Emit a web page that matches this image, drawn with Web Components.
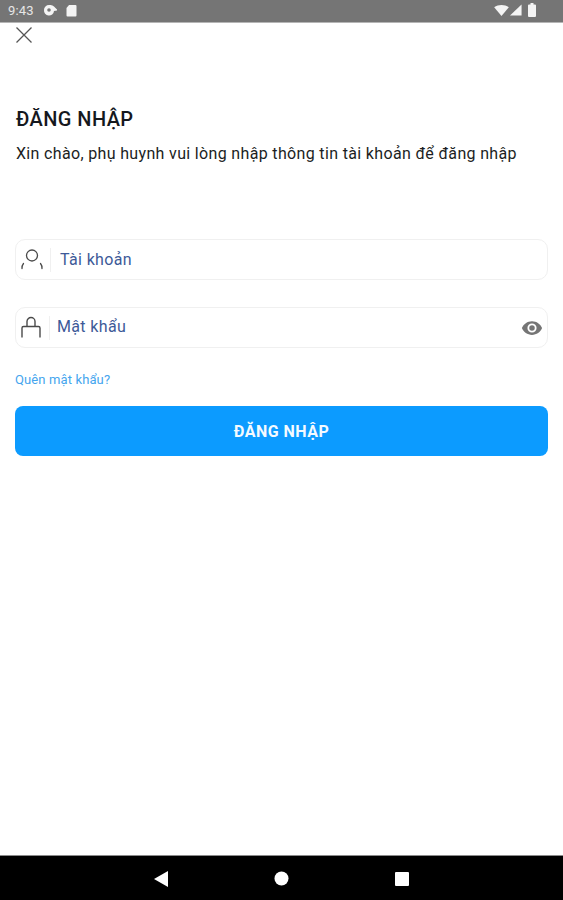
<!DOCTYPE html>
<html lang="vi">
<head>
<meta charset="utf-8">
<title>Đăng nhập</title>
<style>
  html, body { margin: 0; height: 100%; background: #fff; }
  body { font-family: Roboto, "Liberation Sans", sans-serif; }
</style>
</head>
<body>
<login-screen>
  <status-bar slot="top"></status-bar>
  <login-form></login-form>
  <nav-bar slot="bottom"></nav-bar>
</login-screen>

<script>
class LoginScreen extends HTMLElement {
  constructor() {
    super()
    this.attachShadow({ mode: 'open' })
    this.shadowRoot.innerHTML = `<style>
        :host { display: flex; flex-direction: column; height: 900px; width: 563px; overflow: hidden; }
        main { flex: 1; min-height: 0; }
      </style>
      <slot name="top"></slot>
      <main><slot></slot></main>
      <slot name="bottom"></slot>`
  }
}

class StatusBar extends HTMLElement {
  constructor() {
    super()
    this.attachShadow({ mode: 'open' })
    this.shadowRoot.innerHTML = `<style>
        :host { display: flex; align-items: center; height: 23px; box-sizing: border-box; padding: 0 25px 2px 8px; background: #757575; border-bottom: 1px solid #b5b5b5; color: #e6e6e6; font: 13px Roboto, sans-serif; }
        .left { display: flex; align-items: center; gap: 9px; flex: 1; }
        .right { display: flex; align-items: center; gap: 1px; }
        svg { display: block; fill: #f4f4f4; }
        span { letter-spacing: .2px; }
      </style>
      <div class="left">
        <span>9:43</span>
        <svg width="14" height="12" viewBox="0 0 14 12"><path d="M1 6a5 5 0 0 1 5-5h1.600a5 5 0 0 1 3.400 1.500L14 5.500v1l-3 .5A5 5 0 0 1 1 6z"/><circle cx="6" cy="6" r="1.800" fill="#757575"/></svg>
        <svg width="11" height="13" viewBox="0 0 11 13"><path d="M3 1h6.500A1 1 0 0 1 10.500 2v9.500a1 1 0 0 1-1 1h-8a1 1 0 0 1-1-1V4z"/></svg>
      </div>
      <div class="right">
        <svg width="15" height="11" viewBox="0 0 16 12"><path d="M0 2.500C4.500-.8 11.500-.8 16 2.500L8 12z"/></svg>
        <svg width="12" height="12" viewBox="0 0 13 12"><path d="M12.500 0v12H0z"/></svg>
        <svg width="11" height="14" viewBox="0 0 11 14" style="margin-left:4px"><path d="M3.500 0h3v1.500H8a1 1 0 0 1 1 1V13a1 1 0 0 1-1 1H2a1 1 0 0 1-1-1V2.500a1 1 0 0 1 1-1h1.500z"/></svg>
      </div>`
  }
}

class TextField extends HTMLElement {
  constructor() {
    super()
    this.attachShadow({ mode: 'open' })
    this.shadowRoot.innerHTML = `<style>
        :host { display: flex; align-items: center; height: 41px; box-sizing: border-box; border: 1px solid #f0f0f0; border-radius: 10px; background: #fff; }
        .icon { display: flex; justify-content: center; flex: none; box-sizing: border-box; width: var(--icon-w, 34px); padding-right: var(--icon-pad, 2px); border-right: 1px solid #f0f0f0; }
        .label { flex: 1; padding-left: var(--label-gap, 10px); padding-bottom: var(--label-lift, 0); color: #3d5a98; font-size: 16px; letter-spacing: .35px; }
        .end { display: flex; padding-right: 4px; }
      </style>
      <div class="icon"><slot name="icon"></slot></div>
      <div class="label"><slot></slot></div>
      <div class="end"><slot name="end"></slot></div>`
  }
}

class LoginForm extends HTMLElement {
  constructor() {
    super()
    this.attachShadow({ mode: 'open' })
    this.shadowRoot.innerHTML = `<style>
        :host { display: block; padding: 3px 15px 0; color: #14171c; }
        .close { display: block; }
        h1 { margin: 62px 0 0 1px; font-size: 20px; line-height: 26px; font-weight: 500; letter-spacing: .42px; color: #15181e; }
        p { margin: 11px 0 0 1px; font-size: 16px; line-height: 22px; letter-spacing: .34px; color: #1b1e23; }
        .fields { display: flex; flex-direction: column; gap: 27px; margin-top: 74px; }
        .user { --icon-w: 35px; --icon-pad: 3px; --label-gap: 9px; }
        .pass { --icon-w: 34px; --icon-pad: 4px; --label-gap: 7px; --label-lift: 2px; }
        svg { display: block; }
        a { display: block; margin: 24px 0 0; font-size: 13px; line-height: 16px; letter-spacing: .12px; color: #45a5ee; text-decoration: none; }
        button { display: block; width: 100%; height: 50px; margin-top: 18px; padding: 1px 0 0; border: 0; border-radius: 8px; background: #0c9bff; color: #f4faff; font: 700 16px Roboto, sans-serif; letter-spacing: .5px; }
      </style>
      <svg class="close" width="18" height="18" viewBox="0 0 18 18" fill="none" stroke="#555" stroke-width="1.300"><path d="M1.500 1.500l15 15M16.500 1.500l-15 15"/></svg>
      <h1>ĐĂNG NHẬP</h1>
      <p>Xin chào, phụ huynh vui lòng nhập thông tin tài khoản để đăng nhập</p>
      <div class="fields">
        <text-field class="user">
          <svg slot="icon" width="24" height="24" viewBox="0 0 24 24" fill="none" stroke="#4a4a4a" stroke-width="1.300" stroke-linecap="round">
            <circle cx="12" cy="7.500" r="5.500"/>
            <path d="M3.500 15.500C2.300 17 1.800 18.500 2 20.500M20.500 15.500c1.200 1.500 1.700 3 1.500 5"/>
          </svg>
          Tài khoản
        </text-field>
        <text-field class="pass">
          <svg slot="icon" width="22" height="24" viewBox="0 0 22 24" fill="none" stroke="#4a4a4a" stroke-width="1.400">
            <path d="M7 11V5.500a4 4 0 0 1 8 0V11M2 21.500V12a1.500 1.500 0 0 1 1.500-1.500h15A1.500 1.500 0 0 1 20 12v9.500"/>
          </svg>
          Mật khẩu
          <svg slot="end" width="22" height="22" viewBox="0 0 24 24" fill="#757575"><path d="M12 4.500C7 4.500 2.700 7.600 1 12c1.700 4.400 6 7.500 11 7.500s9.300-3.100 11-7.500c-1.700-4.400-6-7.500-11-7.500zM12 17a5 5 0 1 1 0-10 5 5 0 0 1 0 10zm0-8a3 3 0 1 0 0 6 3 3 0 0 0 0-6z"/></svg>
        </text-field>
      </div>
      <a href="#">Quên mật khẩu?</a>
      <button type="button">ĐĂNG NHẬP</button>`
  }
}

class NavBar extends HTMLElement {
  constructor() {
    super()
    this.attachShadow({ mode: 'open' })
    this.shadowRoot.innerHTML = `<style>
        :host { display: flex; justify-content: center; align-items: center; gap: 106px; height: 45px; box-sizing: border-box; background: #000; border-top: 1px solid #8a8a8a; padding-top: 1px; }
        svg { display: block; fill: #fff; }
      </style>
      <svg width="14" height="16" viewBox="0 0 14 16"><path d="M14 0v16L0 8z"/></svg>
      <svg width="15" height="15" viewBox="0 0 15 15"><circle cx="7.500" cy="7.500" r="7"/></svg>
      <svg width="14" height="14" viewBox="0 0 14 14"><rect width="14" height="14" rx="1"/></svg>`
  }
}

customElements.define('login-screen', LoginScreen)
customElements.define('status-bar', StatusBar)
customElements.define('text-field', TextField)
customElements.define('login-form', LoginForm)
customElements.define('nav-bar', NavBar)
</script>
</body>
</html>
